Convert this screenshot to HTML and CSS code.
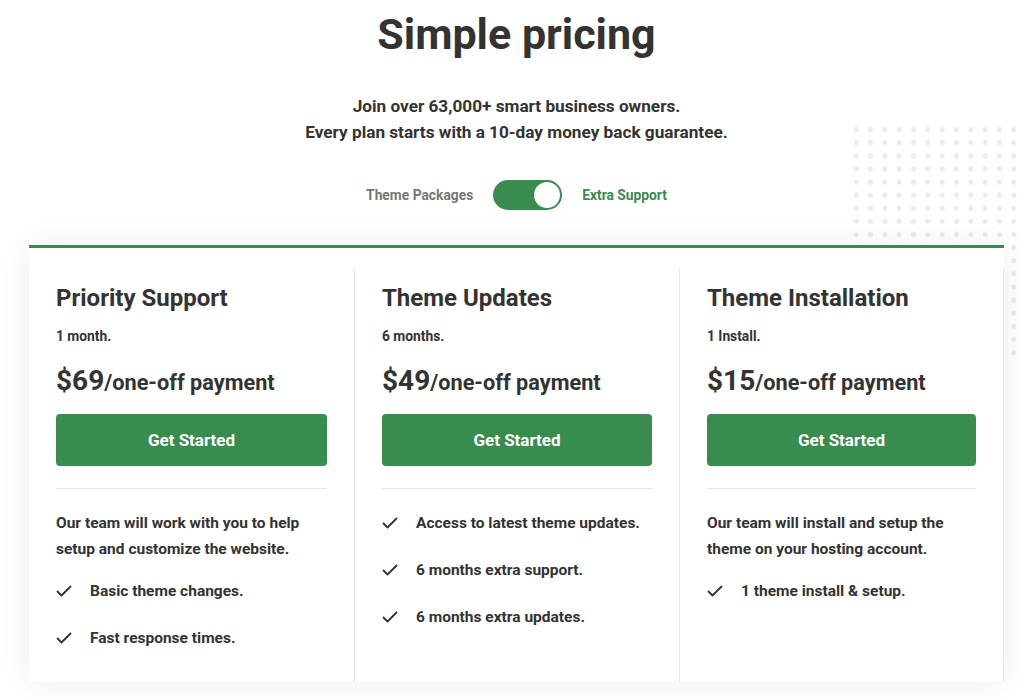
FILE: index.html
```html
<!DOCTYPE html>
<html lang="en">
<head>
<meta charset="utf-8">
<title>Simple pricing</title>
<link rel="stylesheet" href="styles.css">
</head>
<body>
<div class="dots"></div>
<main class="wrap">
  <header class="intro">
    <h1 class="title">Simple pricing</h1>
    <p class="lead">Join over 63,000+ smart business owners.<br>Every plan starts with a 10-day money back guarantee.</p>
    <div class="switch-row">
      <span class="switch-label">Theme Packages</span>
      <span class="switch"><span class="knob"></span></span>
      <span class="switch-label active">Extra Support</span>
    </div>
  </header>
  <section class="card">
    <div class="plan">
      <h2 class="plan-name">Priority Support</h2>
      <p class="plan-term">1 month.</p>
      <p class="price"><span class="amount">$69</span>/one-off payment</p>
      <a class="btn" href="#">Get Started</a>
      <hr class="rule">
      <p class="desc">Our team will work with you to help setup and customize the website.</p>
      <ul class="features">
        <li><svg class="check" viewBox="0 0 16 12"><polyline points="1.5,6.5 5.5,10.5 14.5,1.5"/></svg>Basic theme changes.</li>
        <li><svg class="check" viewBox="0 0 16 12"><polyline points="1.5,6.5 5.5,10.5 14.5,1.5"/></svg>Fast response times.</li>
      </ul>
    </div>
    <div class="plan">
      <h2 class="plan-name">Theme Updates</h2>
      <p class="plan-term">6 months.</p>
      <p class="price"><span class="amount">$49</span>/one-off payment</p>
      <a class="btn" href="#">Get Started</a>
      <hr class="rule">
      <ul class="features first">
        <li><svg class="check" viewBox="0 0 16 12"><polyline points="1.5,6.5 5.5,10.5 14.5,1.5"/></svg>Access to latest theme updates.</li>
        <li><svg class="check" viewBox="0 0 16 12"><polyline points="1.5,6.5 5.5,10.5 14.5,1.5"/></svg>6 months extra support.</li>
        <li><svg class="check" viewBox="0 0 16 12"><polyline points="1.5,6.5 5.5,10.5 14.5,1.5"/></svg>6 months extra updates.</li>
      </ul>
    </div>
    <div class="plan">
      <h2 class="plan-name">Theme Installation</h2>
      <p class="plan-term">1 Install.</p>
      <p class="price"><span class="amount">$15</span>/one-off payment</p>
      <a class="btn" href="#">Get Started</a>
      <hr class="rule">
      <p class="desc">Our team will install and setup the theme on your hosting account.</p>
      <ul class="features">
        <li><svg class="check" viewBox="0 0 16 12"><polyline points="1.5,6.5 5.5,10.5 14.5,1.5"/></svg>1 theme install &amp; setup.</li>
      </ul>
    </div>
  </section>
</main>
</body>
</html>
```

FILE: styles.css
```css
* { box-sizing: border-box; }
html, body { margin: 0; padding: 0; background: #fff; }
body {
  font-family: Roboto, "Liberation Sans", Arial, sans-serif;
  color: #333;
  position: relative;
  min-height: 700px;
  overflow: hidden;
}
.dots {
  position: absolute;
  left: 849px;
  top: 123px;
  width: 190px;
  height: 238px;
  background-image: radial-gradient(circle, #ebebeb 2.3px, rgba(235,235,235,0) 2.9px);
  background-size: 14.34px 13.14px;
  z-index: 0;
}
.wrap {
  position: relative;
  z-index: 1;
  width: 975px;
  margin-left: 29px;
}
.intro { text-align: center; }
.title {
  margin: 0;
  padding-top: 8px;
  font-size: 43px;
  line-height: 53px;
  font-weight: 700;
  color: #333;
}
.lead {
  margin: 32px 0 0;
  font-size: 17.2px;
  line-height: 26px;
  font-weight: 700;
  color: #333;
}
.switch-row {
  margin-top: 35px;
  display: flex;
  justify-content: center;
  align-items: center;
  gap: 20px;
  height: 30px;
}
.switch-label {
  font-size: 13.8px;
  font-weight: 700;
  color: #777;
}
.switch-label.active { color: #378c4e; }
.switch {
  width: 69px;
  height: 30px;
  border-radius: 15px;
  background: #378c4e;
  display: flex;
  justify-content: flex-end;
  align-items: center;
  padding: 0 2px;
}
.knob {
  width: 26px;
  height: 26px;
  border-radius: 50%;
  background: #fff;
}
.card {
  margin-top: 35px;
  background: #fff;
  border-top: 3px solid #378c4e;
  box-shadow: 0 0 30px rgba(0,0,0,0.07);
  padding-top: 20px;
  display: grid;
  grid-template-columns: repeat(3, 1fr);
  height: 437px;
}
.plan {
  padding: 16px 27px 30px 27px;
  border-left: 1px solid #e8e8e8;
}
.plan:first-child { border-left: none; }
.plan:last-child { border-right: 1px solid #e8e8e8; }
.plan-name {
  margin: 0;
  font-size: 24px;
  line-height: 28px;
  font-weight: 700;
  color: #333;
}
.plan-term {
  margin: 14px 0 0;
  font-size: 13.8px;
  line-height: 20px;
  font-weight: 700;
}
.price {
  margin: 17px 0 0;
  font-size: 21.7px;
  line-height: 36px;
  font-weight: 700;
}
.amount { font-size: 28px; }
.btn {
  display: flex;
  justify-content: center;
  align-items: center;
  margin-top: 13px;
  height: 52px;
  border-radius: 4px;
  background: #378c4e;
  color: #fff;
  font-size: 17px;
  font-weight: 700;
  text-decoration: none;
}
.rule {
  margin: 22px 0 0;
  border: none;
  border-top: 1px solid #e6e6e6;
  height: 0;
}
.desc {
  margin: 21px 0 0;
  font-size: 15.5px;
  line-height: 26px;
  font-weight: 700;
}
.features {
  list-style: none;
  margin: 16px 0 0;
  padding: 0;
  display: flex;
  flex-direction: column;
  gap: 21px;
}
.features.first { margin-top: 21px; }
.features li {
  display: flex;
  align-items: center;
  font-size: 15.5px;
  line-height: 26px;
  font-weight: 700;
}
.check {
  width: 16px;
  height: 12px;
  margin-right: 18px;
  flex: none;
  fill: none;
  stroke: #333;
  stroke-width: 1.8;
  stroke-linecap: round;
  stroke-linejoin: round;
}
```
